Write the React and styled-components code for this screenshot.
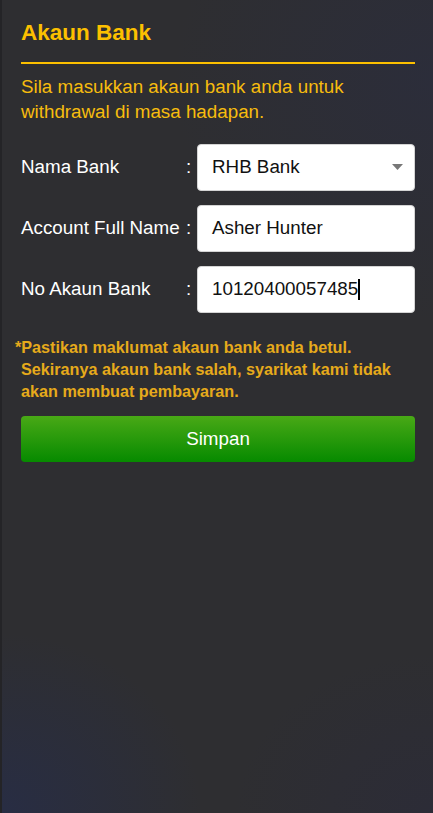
import React from 'react';
import styled, { createGlobalStyle } from 'styled-components';

const GlobalStyle = createGlobalStyle`
  html, body {
    margin: 0;
    padding: 0;
    background: #2e2e31;
  }

  * {
    box-sizing: border-box;
  }
`;

const Page = styled.div`
  min-height: 100vh;
  padding: 20px 18px 40px 21px;
  font-family: "Liberation Sans", Arial, sans-serif;
  border-left: 2px solid #242427;
  background:
    radial-gradient(ellipse 200px 180px at 0% 100%, rgba(34, 44, 86, 0.5), transparent),
    radial-gradient(ellipse 260px 240px at 100% 10%, rgba(40, 44, 72, 0.4), transparent),
    radial-gradient(ellipse 200px 160px at 100% 100%, rgba(40, 40, 66, 0.35), transparent),
    #2e2e31;
`;

const Title = styled.h2`
  margin: 0 0 0 -2px;
  padding-bottom: 16px;
  border-bottom: 2px solid #fcc000;
  font-size: 22.5px;
  line-height: 1.15;
  font-weight: 700;
  color: #fcc000;
`;

const Intro = styled.p`
  margin: 10px 0 20px -2px;
  font-size: 18.8px;
  line-height: 25px;
  color: #f6bc0e;
`;

const Form = styled.div`
  display: flex;
  flex-direction: column;
  gap: 14px;
`;

const Row = styled.div`
  display: grid;
  grid-template-columns: 165px 11px 1fr;
  align-items: center;
  margin-left: -2px;
`;

const Label = styled.span`
  font-size: 18.8px;
  color: #ffffff;
  white-space: nowrap;
`;

const Colon = styled.span`
  font-size: 18.8px;
  color: #ffffff;
`;

const Field = styled.div`
  position: relative;
  height: 47px;
  display: flex;
  align-items: center;
  padding: 0 14px;
  background: #ffffff;
  border: 1px solid #d4d4d4;
  border-radius: 4px;
  font-size: 18.8px;
  color: #111111;
`;

const Caret = styled.span`
  display: inline-block;
  width: 2px;
  height: 21px;
  background: #000000;
`;

const Arrow = styled.svg`
  margin-left: auto;
  margin-right: -3px;
`;

const Note = styled.p`
  margin: 23px 0 14px -2px;
  text-indent: -6px;
  font-size: 16.2px;
  line-height: 22px;
  font-weight: 700;
  color: #e6aa1b;
`;

const SaveButton = styled.button`
  display: block;
  width: calc(100% + 2px);
  height: 46px;
  margin-left: -2px;
  border: none;
  border-radius: 4px;
  background: linear-gradient(to bottom, #49a916, #068a00);
  font-family: inherit;
  font-size: 18.8px;
  color: #ffffff;
  cursor: pointer;
`;

const App = () => {
  const fields = [
    { label: 'Nama Bank', value: 'RHB Bank', select: true },
    { label: 'Account Full Name', value: 'Asher Hunter' },
    { label: 'No Akaun Bank', value: '10120400057485', active: true }
  ];

  return (
    <>
      <GlobalStyle />
      <Page>
        <Title>Akaun Bank</Title>
        <Intro>Sila masukkan akaun bank anda untuk withdrawal di masa hadapan.</Intro>

        <Form>
          {fields.map((field) => (
            <Row key={field.label}>
              <Label>{field.label}</Label>
              <Colon>:</Colon>
              <Field>
                {field.value}
                {field.active && <Caret />}
                {field.select && (
                  <Arrow width="11" height="6" viewBox="0 0 11 6">
                    <path d="M0 0 H11 L5.5 6 Z" fill="#777777" />
                  </Arrow>
                )}
              </Field>
            </Row>
          ))}
        </Form>

        <Note>
          *Pastikan maklumat akaun bank anda betul. Sekiranya akaun bank salah, syarikat kami tidak
          akan membuat pembayaran.
        </Note>

        <SaveButton>Simpan</SaveButton>
      </Page>
    </>
  );
};

export default App;
